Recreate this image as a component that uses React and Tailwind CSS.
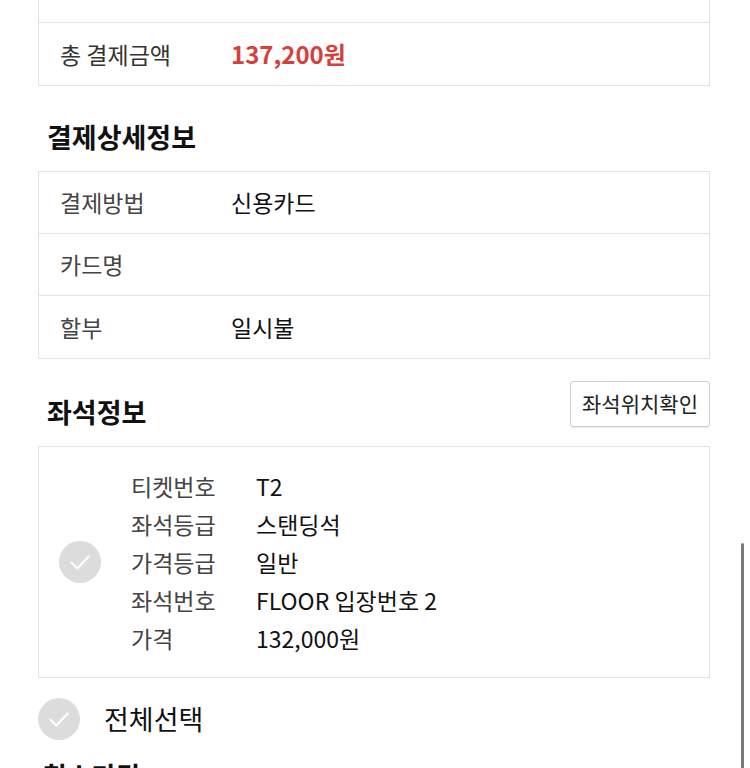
import React from "react";

function Check({ className }) {
  return (
    <div className={"flex items-center justify-center rounded-full bg-[#dcdcdc] " + className}>
      <svg width="26" height="26" viewBox="0 0 24 24" fill="none">
        <path d="M4 12.5 L9.5 18 L20 7" stroke="#ffffff" strokeWidth="2" strokeLinecap="round" strokeLinejoin="round" />
      </svg>
    </div>
  );
}

function InfoRow({ label, value }) {
  return (
    <div className="flex h-[62px] items-center px-[21px] text-[23px]">
      <span className="w-[171px] text-[#444]">{label}</span>
      <span className="text-[#111]">{value}</span>
    </div>
  );
}

export default function App() {
  const seat = [
    ["티켓번호", "T2"],
    ["좌석등급", "스탠딩석"],
    ["가격등급", "일반"],
    ["좌석번호", "FLOOR 입장번호 2"],
    ["가격", "132,000원"],
  ];
  return (
    <div className="relative h-[768px] w-[750px] overflow-hidden bg-white font-['Noto_Sans_CJK_KR',sans-serif]">
      <div className="pl-[38px] pr-[40px]">
        {/* top box */}
        <div className="border-x border-b border-[#e2e2e2]">
          <div className="h-[23px] border-b border-[#e2e2e2]" />
          <div className="flex h-[62px] items-center px-[21px]">
            <span className="w-[171px] text-[23px] text-[#333]">총 결제금액</span>
            <span className="text-[24px] font-bold text-[#d6403a]">137,200원</span>
          </div>
        </div>

        {/* 결제상세정보 */}
        <h2 className="pb-[21px] pl-[9px] pt-[37px] text-[27px] font-bold leading-[27px] text-[#111]">결제상세정보</h2>
        <div className="divide-y divide-[#e2e2e2] border border-[#e2e2e2]">
          <InfoRow label="결제방법" value="신용카드" />
          <InfoRow label="카드명" value="" />
          <InfoRow label="할부" value="일시불" />
        </div>

        {/* 좌석정보 */}
        <div className="flex items-end justify-between pb-[19px] pt-[22px]">
          <h2 className="mb-[2px] pl-[9px] text-[27px] font-bold leading-[27px] text-[#111]">좌석정보</h2>
          <button className="flex h-[46px] w-[140px] items-center justify-center rounded-[3px] border border-[#cfcfcf] bg-white text-[21px] text-[#222] shadow-[0_1px_1px_rgba(0,0,0,0.08)]">
            좌석위치확인
          </button>
        </div>
        <div className="flex items-center border border-[#e2e2e2] py-[20px] pl-[20px]">
          <Check className="h-[42px] w-[42px]" />
          <div className="ml-[30px] flex flex-col">
            {seat.map(([l, v]) => (
              <div key={l} className="flex h-[38px] items-center text-[23px]">
                <span className="w-[125px] text-[#444]">{l}</span>
                <span className="text-[#111]">{v}</span>
              </div>
            ))}
          </div>
        </div>

        {/* 전체선택 */}
        <div className="mt-[20px] flex items-center">
          <Check className="h-[42px] w-[42px]" />
          <span className="ml-[24px] text-[27px] text-[#111]">전체선택</span>
        </div>

        <h2 className="mt-[22px] pl-[4px] text-[27px] font-bold leading-[27px] text-[#111]">취소마감</h2>
      </div>

      {/* scrollbar */}
      <div className="absolute right-[6px] top-[543px] h-[240px] w-[3px] rounded-full bg-[#7a7a7a]" />
    </div>
  );
}
